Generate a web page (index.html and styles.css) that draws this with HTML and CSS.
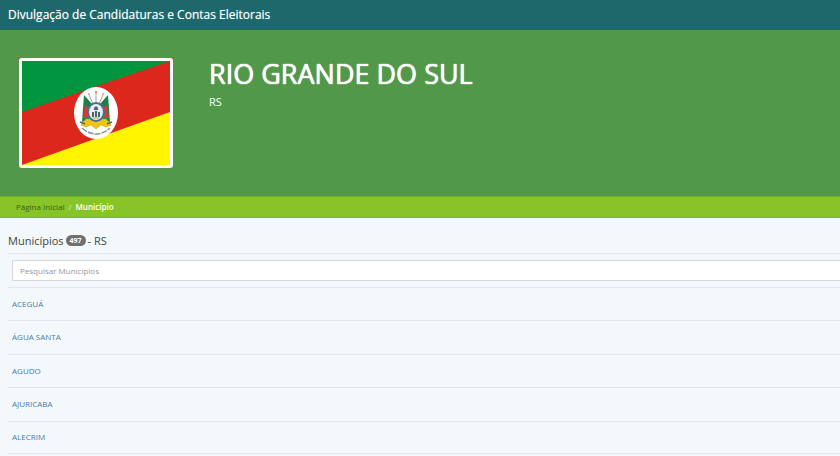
FILE: index.html
```html
<!DOCTYPE html>
<html lang="pt-BR">
<head>
    <meta charset="UTF-8">
    <meta name="viewport" content="width=device-width, initial-scale=1.0">
    <title>Divulgação de Candidaturas e Contas Eleitorais</title>
    <link rel="stylesheet" href="styles.css">
</head>
<body>
    <header class="topbar">Divulgação de Candidaturas e Contas Eleitorais</header>
    <section class="state">
        <!-- state flag -->
        <svg class="flag" viewBox="0 0 148 104" role="img" aria-label="Bandeira do Rio Grande do Sul">
            <rect width="148" height="104" fill="#dc271d"/>
            <path d="M0 0H148L0 51Z" fill="#00963f"/>
            <path d="M148 51V104H0Z" fill="#fff500"/>
            <ellipse cx="74" cy="52" rx="22" ry="26" fill="#fff"/>
            <!-- lances -->
            <g stroke="#a98062" stroke-width="0.8">
                <path d="M74 44V32M71 43L67 34M77 43L81 34M68 44L63 38M80 44L85 38"/>
            </g>
            <g fill="#d8553a">
                <circle cx="74" cy="31" r="0.9"/>
                <circle cx="67" cy="33" r="0.8"/>
                <circle cx="81" cy="33" r="0.8"/>
            </g>
            <!-- banners -->
            <path d="M62 34L70 43L67 59L60 61Z" fill="#19814c"/>
            <path d="M86 34L78 43L81 59L88 61Z" fill="#19814c"/>
            <path d="M63 44L68 47L66 57L61 57Z" fill="#d33b35"/>
            <path d="M85 44L80 47L82 57L87 57Z" fill="#d33b35"/>
            <!-- ribbons and cannons -->
            <path d="M59 64L64 58L70 58H78L84 58L89 64L84 66L79 64L74 68L69 64L64 66Z" fill="#edc519" stroke="#c9a423" stroke-width="0.6"/>
            <path d="M58 61L63 63M90 61L85 63" stroke="#6a6250" stroke-width="1.5"/>
            <ellipse cx="74" cy="51" rx="8" ry="9" fill="#e6ecef" stroke="#4b6f90" stroke-width="2"/>
            <path d="M74 45L76 47V49H72V47ZM70 51H72V56H70ZM76 51H78V56H76ZM73 50H75V56H73Z" fill="#4b6268"/>
            <path d="M71 57H77" stroke="#b7a052"/>
            <path d="M60 67Q74 79 88 67" fill="none" stroke="#8994a0" stroke-width="1.5" stroke-dasharray="6 1"/>
        </svg>
        <div class="state-info">
            <h1 class="state-name">RIO GRANDE DO SUL</h1>
            <p class="state-code">RS</p>
        </div>
    </section>
    <nav class="breadcrumb" aria-label="Navegação">
        <a href="#">Página Inicial</a>
        <span class="separator">/</span>
        <span class="current">Município</span>
    </nav>
    <main class="content">
        <h2 class="list-title">Municípios <span class="badge">497</span> - RS</h2>
        <table class="cities">
            <thead>
                <tr>
                    <th><input class="search" type="text" placeholder="Pesquisar Municípios" aria-label="Pesquisar Municípios"></th>
                </tr>
            </thead>
            <tbody>
                <tr><td><a href="#">ACEGUÁ</a></td></tr>
                <tr><td><a href="#">ÁGUA SANTA</a></td></tr>
                <tr><td><a href="#">AGUDO</a></td></tr>
                <tr><td><a href="#">AJURICABA</a></td></tr>
                <tr><td><a href="#">ALECRIM</a></td></tr>
            </tbody>
        </table>
    </main>
</body>
</html>
```
FILE: styles.css
```css
*{
    box-sizing: border-box;
}
body{
    margin: 0;
    background-color: #f3f8fb;
    color: #444;
    font-family: "Open Sans", sans-serif;
    font-size: 8px;
}
a{
    text-decoration: none;
}
.topbar{
    background-color: #1d686b;
    color: white;
    font-size: 12px;
    line-height: 29px;
    padding: 0 8px 1px;
    text-shadow: 0 0 1px rgba(255, 255, 255, 0.5);
}
.state{
    display: flex;
    align-items: flex-start;
    gap: 36px;
    background-color: #519848;
    color: white;
    padding: 28px 19px;
}
.flag{
    width: 154px;
    height: 110px;
    border: 3px solid white;
    border-radius: 3px;
    flex: none;
}
.state-name{
    margin: 0;
    font-size: 27px;
    font-weight: 500;
    line-height: 32px;
    text-shadow: 0 0 1px white, 0 0 1px white;
}
.state-code{
    margin: 4px 0 0;
    font-size: 11px;
    line-height: 16px;
}
.breadcrumb{
    display: flex;
    gap: 4px;
    background-color: #87c428;
    border-top: 1px solid #73ab2b;
    border-bottom: 1px solid #7db526;
    padding: 0 16px;
    line-height: 20px;
}
.breadcrumb a{
    color: #3f5c20;
}
.separator{
    color: #d7edaf;
}
.current{
    color: white;
    font-weight: 600;
}
.content{
    padding: 15px 0 0 8px;
}
.list-title{
    display: flex;
    align-items: center;
    gap: 2px;
    margin: 0 0 5px;
    font-size: 11px;
    font-weight: 400;
    line-height: 15px;
}
.badge{
    background-color: #707070;
    border-radius: 6px;
    color: white;
    font-size: 7px;
    font-weight: 700;
    line-height: 11px;
    padding: 0 4px;
}
.cities{
    width: 100%;
    border-collapse: separate;
    border-spacing: 0;
}
.cities th,
.cities td{
    border-top: 1px solid #e2e7ec;
    padding: 0 0 0 4px;
    text-align: left;
}
.cities th{
    height: 34px;
}
.cities td{
    height: 33px;
    padding-bottom: 2px;
}
.cities tr:nth-child(even) td{
    height: 34px;
}
.cities tr:last-child td{
    border-bottom: 1px solid #e2e7ec;
}
.cities a{
    color: #4a78ad;
}
.search{
    display: block;
    width: 100%;
    height: 21px;
    background-color: white;
    border: 1px solid #d5d5dc;
    border-right: none;
    border-radius: 2px 0 0 2px;
    color: #555;
    font-family: inherit;
    font-size: 8px;
    padding: 0 7px;
}
.search::placeholder{
    color: #999;
}
```
